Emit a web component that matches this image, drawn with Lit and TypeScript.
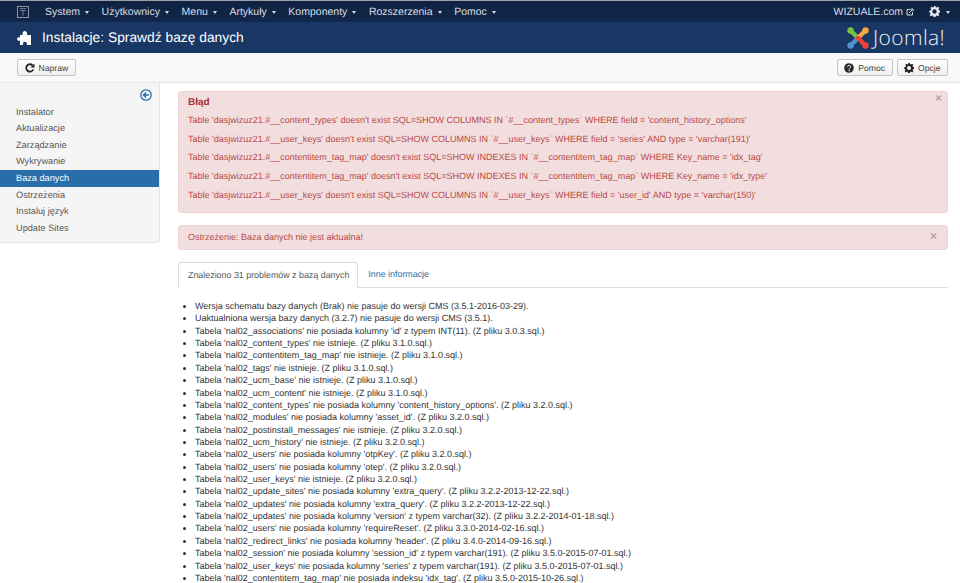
import { LitElement, html, css, svg } from "lit";
import { customElement } from "lit/decorators.js";

const caret = html`<span class="caret"></span>`;
const gear = (c: string, s: number) => html`<svg class="ic" width=${s} height=${s} viewBox="0 0 16 16"><path fill=${c} fill-rule="evenodd" d="M6.600 0h2.800l.4 2.200 1.300.6L13 1.500l2 2-1.300 1.900.6 1.300 2.200.4v2.800l-2.200.4-.6 1.300 1.300 1.900-2 2-1.900-1.300-1.300.6-.4 2.200H6.600l-.4-2.200-1.300-.6L3 15.500l-2-2 1.300-1.900-.6-1.300L.5 9.900V7.100l2.200-.4.6-1.300L2 3.500l2-2 1.900 1.300 1.300-.6zM8 5.300a3.200 3.200 0 1 0 0 6.400 3.200 3.200 0 0 0 0-6.400z" transform="translate(0 -.5)"/></svg>`;

const menus = ["System", "Użytkownicy", "Menu", "Artykuły", "Komponenty", "Rozszerzenia", "Pomoc"];
const side = ["Instalator", "Aktualizacje", "Zarządzanie", "Wykrywanie", "Baza danych", "Ostrzeżenia", "Instaluj język", "Update Sites"];
const errors = [
  "Table 'dasjwizuz21.#__content_types' doesn't exist SQL=SHOW COLUMNS IN `#__content_types` WHERE field = 'content_history_options'",
  "Table 'dasjwizuz21.#__user_keys' doesn't exist SQL=SHOW COLUMNS IN `#__user_keys` WHERE field = 'series' AND type = 'varchar(191)'",
  "Table 'dasjwizuz21.#__contentitem_tag_map' doesn't exist SQL=SHOW INDEXES IN `#__contentitem_tag_map` WHERE Key_name = 'idx_tag'",
  "Table 'dasjwizuz21.#__contentitem_tag_map' doesn't exist SQL=SHOW INDEXES IN `#__contentitem_tag_map` WHERE Key_name = 'idx_type'",
  "Table 'dasjwizuz21.#__user_keys' doesn't exist SQL=SHOW COLUMNS IN `#__user_keys` WHERE field = 'user_id' AND type = 'varchar(150)'",
];
const problems = [
  "Wersja schematu bazy danych (Brak) nie pasuje do wersji CMS (3.5.1-2016-03-29).",
  "Uaktualniona wersja bazy danych (3.2.7) nie pasuje do wersji CMS (3.5.1).",
  "Tabela 'nal02_associations' nie posiada kolumny 'id' z typem INT(11). (Z pliku 3.0.3.sql.)",
  "Tabela 'nal02_content_types' nie istnieje. (Z pliku 3.1.0.sql.)",
  "Tabela 'nal02_contentitem_tag_map' nie istnieje. (Z pliku 3.1.0.sql.)",
  "Tabela 'nal02_tags' nie istnieje. (Z pliku 3.1.0.sql.)",
  "Tabela 'nal02_ucm_base' nie istnieje. (Z pliku 3.1.0.sql.)",
  "Tabela 'nal02_ucm_content' nie istnieje. (Z pliku 3.1.0.sql.)",
  "Tabela 'nal02_content_types' nie posiada kolumny 'content_history_options'. (Z pliku 3.2.0.sql.)",
  "Tabela 'nal02_modules' nie posiada kolumny 'asset_id'. (Z pliku 3.2.0.sql.)",
  "Tabela 'nal02_postinstall_messages' nie istnieje. (Z pliku 3.2.0.sql.)",
  "Tabela 'nal02_ucm_history' nie istnieje. (Z pliku 3.2.0.sql.)",
  "Tabela 'nal02_users' nie posiada kolumny 'otpKey'. (Z pliku 3.2.0.sql.)",
  "Tabela 'nal02_users' nie posiada kolumny 'otep'. (Z pliku 3.2.0.sql.)",
  "Tabela 'nal02_user_keys' nie istnieje. (Z pliku 3.2.0.sql.)",
  "Tabela 'nal02_update_sites' nie posiada kolumny 'extra_query'. (Z pliku 3.2.2-2013-12-22.sql.)",
  "Tabela 'nal02_updates' nie posiada kolumny 'extra_query'. (Z pliku 3.2.2-2013-12-22.sql.)",
  "Tabela 'nal02_updates' nie posiada kolumny 'version' z typem varchar(32). (Z pliku 3.2.2-2014-01-18.sql.)",
  "Tabela 'nal02_users' nie posiada kolumny 'requireReset'. (Z pliku 3.3.0-2014-02-16.sql.)",
  "Tabela 'nal02_redirect_links' nie posiada kolumny 'header'. (Z pliku 3.4.0-2014-09-16.sql.)",
  "Tabela 'nal02_session' nie posiada kolumny 'session_id' z typem varchar(191). (Z pliku 3.5.0-2015-07-01.sql.)",
  "Tabela 'nal02_user_keys' nie posiada kolumny 'series' z typem varchar(191). (Z pliku 3.5.0-2015-07-01.sql.)",
  "Tabela 'nal02_contentitem_tag_map' nie posiada indeksu 'idx_tag'. (Z pliku 3.5.0-2015-10-26.sql.)",
];

@customElement("app-root")
export class AppRoot extends LitElement {
  static styles = css`
    :host { display: block; height: 583px; overflow: hidden; background: #fff; font-family: "Liberation Sans", Arial, sans-serif; font-size: 9px; color: #333; text-rendering: geometricPrecision; }
    .nav { height: 22px; background: linear-gradient(#0f2341, #12274a); border-top: 1px solid #9aa3ad; box-sizing: border-box; display: flex; align-items: center; padding-left: 17px; color: #d9dde3; font-size: 10.5px; }
    .brand { width: 28px; display: flex; }
    .menus { display: flex; gap: 12.6px; flex: 1; }
    .menu { display: flex; align-items: center; gap: 5px; }
    .caret { width: 0; height: 0; border-left: 2.5px solid transparent; border-right: 2.5px solid transparent; border-top: 3px solid currentColor; margin-top: 1px; }
    .right { display: flex; align-items: center; padding-right: 10px; }
    .ext { margin-left: 3px; }
    .cog { display: flex; align-items: center; gap: 6px; margin-left: 15px; }
    .head { height: 31px; background: #193764; display: flex; align-items: center; padding-left: 17px; color: #fff; font-size: 13.8px; }
    .head > svg { margin-right: 10px; }
    .head .title { flex: 1; }
    .joomla { display: flex; align-items: center; margin-right: 15px; gap: 4px; font-size: 21px; letter-spacing: .4px; font-family: "Open Sans", "Liberation Sans", sans-serif; font-weight: 300; color: #eef1f5; }
    .bar { height: 30px; box-sizing: border-box; background: #f8f8f8; border-bottom: 1px solid #e5e5e5; display: flex; align-items: center; padding: 0 12px 0 17px; justify-content: space-between; }
    .btn { height: 17px; box-sizing: border-box; display: inline-flex; align-items: center; gap: 4px; padding: 0 6.5px; border: 1px solid #c4c4c4; border-radius: 2px; background: linear-gradient(#fff, #efefef); color: #444; font-size: 8.6px; }
    .btns { display: flex; gap: 4px; }
    .main { display: flex; align-items: flex-start; }
    .sidebar { width: 160px; height: 160px; box-sizing: border-box; background: #f5f5f5; border-right: 1px solid #e6e6e6; border-bottom: 1px solid #e3e3e3; border-bottom-right-radius: 3px; position: relative; padding-top: 20.7px; flex: none; }
    .toggle { position: absolute; right: 7px; top: 6px; display: flex; }
    .item { height: 16.57px; line-height: 16.57px; padding-left: 16px; color: #555; font-size: 9.2px; }
    .item.on { background: #2a6ea9; color: #fff; }
    .content { flex: 1; padding: 8px 12px 0 18px; min-width: 0; }
    .alert { position: relative; background: #f2dede; border: 1px solid #eed3d7; border-radius: 3px; color: #b94a48; padding: 0 9px; box-sizing: border-box; }
    .a1 { height: 122px; padding-top: 4px; }
    .a1 h4 { margin: 0 0 2px; font-size: 10px; line-height: 13px; color: #a9303a; }
    .a1 p { margin: 0; height: 18.7px; line-height: 18.7px; white-space: nowrap; }
    .a2 { height: 25px; line-height: 23px; margin-top: 12px; }
    .x { position: absolute; right: 5px; top: 0; color: #b5a5a7; font-weight: bold; font-size: 12px; line-height: 12px; }
    .a2 .x { right: 10px; top: 4px; }
    .tabs { display: flex; margin-top: 12px; height: 26px; border-bottom: 1px solid #ddd; box-sizing: border-box; font-size: 8.9px; }
    .tab { line-height: 25px; height: 26px; box-sizing: border-box; border-radius: 3px 3px 0 0; }
    .tab.on { background: #fff; border: 1px solid #ddd; border-bottom-color: #fff; color: #555; padding: 0 8px 0 9px; }
    .tab.off { color: #2a6ea9; margin-left: 10px; }
    ul { margin: 12px 0 0; padding: 0 0 0 17px; }
    li { line-height: 12.36px; white-space: nowrap; color: #333; }
  `;

  render() {
    return html`
      <div class="nav">
        <span class="brand"><svg width="12" height="12" viewBox="0 0 12 12"><rect x=".5" y=".5" width="11" height="11" fill="none" stroke="#8a93a3"/><path d="M3 2.500h6M3 4.500h6M6 4.500v5" stroke="#6f7a8c" fill="none"/></svg></span>
        <div class="menus">${menus.map((m) => html`<span class="menu">${m}${caret}</span>`)}</div>
        <div class="right">
          WIZUALE.com
          <svg class="ext" width="8" height="8" viewBox="0 0 8 8"><path d="M1 1.500h3.500M1 1.500v5.500h5.500V4" stroke="#d9dde3" fill="none"/><path d="M3 5l3.500-3.500M4.800 1h2.200v2.200" stroke="#d9dde3" fill="none"/></svg>
          <span class="cog">${gear("#e8ebef", 11)}${caret}</span>
        </div>
      </div>
      <div class="head">
        <svg width="15" height="14" viewBox="0 0 15 14"><path fill="#fff" d="M5.500 4V2.500C5.500 1 6.500 0 7.800 0S10 1 10 2.500V4h4v10H9.800v-1.500c0-1-.9-1.700-1.900-1.700s-1.900.7-1.900 1.700V14H3V9.800H2C.9 9.800 0 9 0 8s.9-1.800 2-1.800h1V4z"/></svg>
        <span class="title">Instalacje: Sprawdź bazę danych</span>
        <span class="joomla">
          <svg width="22" height="22" viewBox="0 0 22 22">
            ${svg`<g fill="none" stroke-width="4.400" stroke-linecap="round">
              <path d="M5 5l6 6" stroke="#7ac143"/><path d="M17 5l-6 6" stroke="#f9a541"/>
              <path d="M11 11l-6 6" stroke="#5091cd"/><path d="M11 11l6 6" stroke="#ee4035"/>
            </g>
            <circle cx="3.500" cy="3.500" r="3.200" fill="#7ac143"/><circle cx="18.500" cy="3.500" r="3.200" fill="#f9a541"/>
            <circle cx="3.500" cy="18.500" r="3.200" fill="#5091cd"/><circle cx="18.500" cy="18.500" r="3.200" fill="#ee4035"/>`}
          </svg>
          Joomla!
        </span>
      </div>
      <div class="bar">
        <span class="btn"><svg width="10" height="10" viewBox="0 0 10 10"><path d="M8.300 6.500A3.700 3.700 0 1 1 7.600 2.400" fill="none" stroke="#222" stroke-width="1.800"/><path fill="#222" d="M9.500.5v4h-4z"/></svg>Napraw</span>
        <div class="btns">
          <span class="btn"><svg width="10" height="10" viewBox="0 0 10 10"><circle cx="5" cy="5" r="4.800" fill="#2a2a2a"/><path d="M3.500 3.900c0-2 3.200-2 3.200-.1 0 1.200-1.600 1.200-1.600 2.500" fill="none" stroke="#fff" stroke-width="1"/><rect x="4.500" y="6.900" width="1.200" height="1.200" fill="#fff"/></svg>Pomoc</span>
          <span class="btn">${gear("#222", 10)}Opcje</span>
        </div>
      </div>
      <div class="main">
        <aside class="sidebar">
          <span class="toggle"><svg width="12" height="12" viewBox="0 0 12 12"><circle cx="6" cy="6" r="5.200" fill="none" stroke="#2a6ea9" stroke-width="1.300"/><path d="M9 6H4M6 3.500L3.500 6 6 8.500" fill="none" stroke="#2a6ea9" stroke-width="1.400"/></svg></span>
          ${side.map((s) => html`<div class="item ${s === "Baza danych" ? "on" : ""}">${s}</div>`)}
        </aside>
        <div class="content">
          <div class="alert a1">
            <span class="x">×</span>
            <h4>Błąd</h4>
            ${errors.map((e) => html`<p>${e}</p>`)}
          </div>
          <div class="alert a2"><span class="x">×</span>Ostrzeżenie: Baza danych nie jest aktualna!</div>
          <div class="tabs">
            <div class="tab on">Znaleziono 31 problemów z bazą danych</div>
            <div class="tab off">Inne informacje</div>
          </div>
          <ul>${problems.map((p) => html`<li>${p}</li>`)}</ul>
        </div>
      </div>
    `;
  }
}
